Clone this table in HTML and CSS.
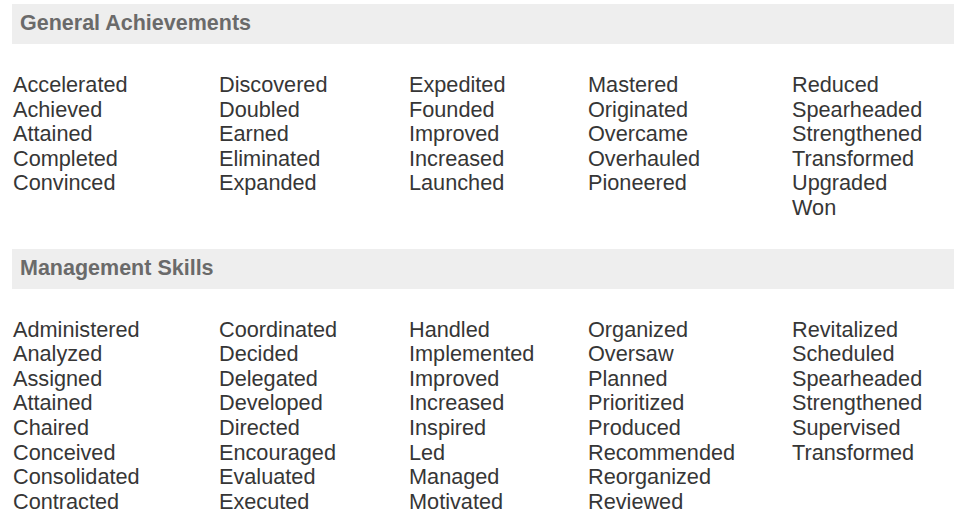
FILE: index.html
```html
<!DOCTYPE html>
<html>
<head>
<meta charset="utf-8">
<link rel="stylesheet" href="styles.css">
</head>
<body>
<section class="group">
  <h2 class="group-title">General Achievements</h2>
  <div class="words">
    <ul class="col"><li>Accelerated</li><li>Achieved</li><li>Attained</li><li>Completed</li><li>Convinced</li></ul>
    <ul class="col"><li>Discovered</li><li>Doubled</li><li>Earned</li><li>Eliminated</li><li>Expanded</li></ul>
    <ul class="col"><li>Expedited</li><li>Founded</li><li>Improved</li><li>Increased</li><li>Launched</li></ul>
    <ul class="col"><li>Mastered</li><li>Originated</li><li>Overcame</li><li>Overhauled</li><li>Pioneered</li></ul>
    <ul class="col"><li>Reduced</li><li>Spearheaded</li><li>Strengthened</li><li>Transformed</li><li>Upgraded</li><li>Won</li></ul>
  </div>
</section>
<section class="group group-second">
  <h2 class="group-title">Management Skills</h2>
  <div class="words">
    <ul class="col"><li>Administered</li><li>Analyzed</li><li>Assigned</li><li>Attained</li><li>Chaired</li><li>Conceived</li><li>Consolidated</li><li>Contracted</li></ul>
    <ul class="col"><li>Coordinated</li><li>Decided</li><li>Delegated</li><li>Developed</li><li>Directed</li><li>Encouraged</li><li>Evaluated</li><li>Executed</li></ul>
    <ul class="col"><li>Handled</li><li>Implemented</li><li>Improved</li><li>Increased</li><li>Inspired</li><li>Led</li><li>Managed</li><li>Motivated</li></ul>
    <ul class="col"><li>Organized</li><li>Oversaw</li><li>Planned</li><li>Prioritized</li><li>Produced</li><li>Recommended</li><li>Reorganized</li><li>Reviewed</li></ul>
    <ul class="col"><li>Revitalized</li><li>Scheduled</li><li>Spearheaded</li><li>Strengthened</li><li>Supervised</li><li>Transformed</li></ul>
  </div>
</section>
</body>
</html>
```
FILE: styles.css
```css
html, body {
  margin: 0;
  padding: 0;
  background: #ffffff;
}
body {
  font-family: "Liberation Sans", Arial, sans-serif;
  color: #363636;
  padding-top: 4px;
}
.group-title {
  margin: 0 0 0 12px;
  height: 40px;
  box-sizing: border-box;
  padding: 0 0 0 8px;
  background: #eeeeee;
  color: #6a6a6a;
  font-size: 21.5px;
  font-weight: bold;
  line-height: 38px;
}
.words {
  display: grid;
  grid-template-columns: 206px 190px 179px 204px 1fr;
  padding-left: 13px;
  margin-top: 29px;
}
.col {
  list-style: none;
  margin: 0;
  padding: 0;
  font-size: 21.7px;
  line-height: 24.6px;
}
.col li {
  margin: 0;
  white-space: nowrap;
}
.group-second {
  margin-top: 28px;
}
```
